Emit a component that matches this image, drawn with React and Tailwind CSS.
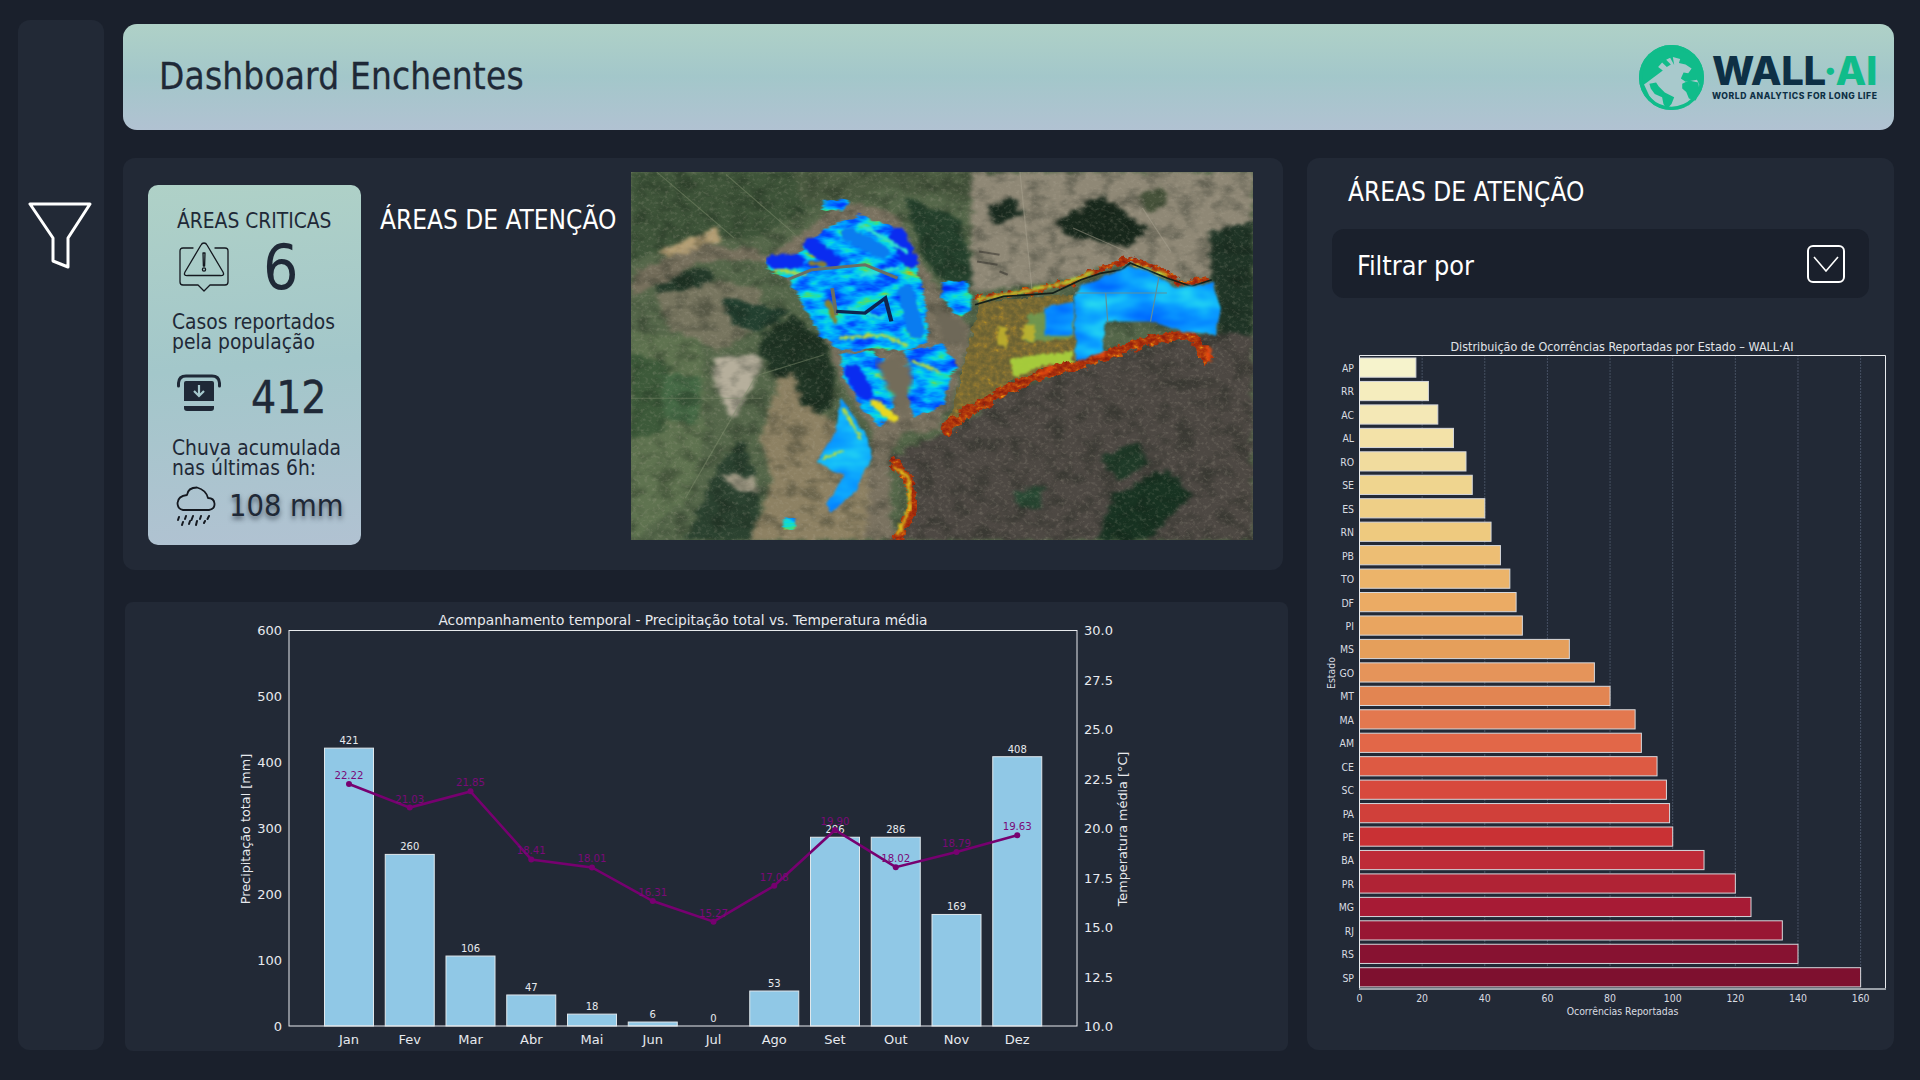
import React from "react";

const months = ["Jan","Fev","Mar","Abr","Mai","Jun","Jul","Ago","Set","Out","Nov","Dez"];
const rain = [421,260,106,47,18,6,0,53,286,286,169,408];
const temp = [22.22,21.03,21.85,18.41,18.01,16.31,15.27,17.08,19.90,18.02,18.79,19.63];
const states = [
["AP",18,"#f6f3cc"],["RR",22,"#f5edbe"],["AC",25,"#f4e8b6"],["AL",30,"#f3e2a8"],["RO",34,"#f1dc9e"],["SE",36,"#efd58f"],
["ES",40,"#eecf87"],["RN",42,"#eeca7f"],["PB",45,"#edbe74"],["TO",48,"#ecb46a"],["DF",50,"#ebab64"],["PI",52,"#e9a560"],
["MS",67,"#e59f5b"],["GO",75,"#e5945a"],["MT",80,"#e28552"],["MA",88,"#e3784f"],["AM",90,"#e26748"],["CE",95,"#dd5a43"],
["SC",98,"#d7493d"],["PA",99,"#d0403a"],["PE",100,"#c93134"],["BA",110,"#be2b38"],["PR",120,"#b02335"],["MG",125,"#a71b35"],
["RJ",135,"#981633"],["RS",140,"#871231"],["SP",160,"#7e102f"]];

const headFont = "font-['DejaVu_Sans_Condensed','DejaVu_Sans',sans-serif] [font-stretch:condensed]";

function Funnel() {
  return (
    <svg width="66" height="68" viewBox="0 0 66 68" fill="none" stroke="#fff" strokeWidth="3" strokeLinejoin="round">
      <path d="M2 2H62L40 36V65L25 59V36Z" />
    </svg>
  );
}

function Globe() {
  return (
    <svg width="65" height="65" viewBox="27 0 194 194">
      <circle cx="124" cy="97" r="97" fill="#10bc8a" />
      <path fill="#a8c9cc" d="M42 118C60 104 78 92 98 76L84 66 96 52 110 66 122 58 108 44 120 38 132 60 128 36 150 42 146 54 166 58 184 70 174 84 160 82 152 100 166 110 200 104 207 118 206 150 190 170 168 184 140 192 105 190 80 178 58 152Z" />
      <path fill="#10bc8a" d="M58 116 78 112 86 124 104 142 132 156 124 176 110 192 100 176 96 156 74 146 62 130Z" />
      <path fill="#10bc8a" d="M156 116 176 106 204 112 208 140 196 166 176 160 168 140 156 130Z" />
      <circle cx="124" cy="97" r="92" fill="none" stroke="#10bc8a" strokeWidth="10" />
    </svg>
  );
}

function Logo() {
  return (
    <div className="flex items-center gap-[8px] mr-[17px]">
      <Globe />
      <div className="flex flex-col w-[165px]">
        <div className="font-['Inter',sans-serif] font-extrabold text-[40px] leading-[36px] tracking-[-0.4px] text-[#0e3045] whitespace-nowrap">
          WALL<span className="text-[#10bc8a]">·AI</span>
        </div>
        <div className="font-['Inter',sans-serif] font-extrabold text-[8.6px] leading-[12px] tracking-[0.55px] text-[#0e3045] whitespace-nowrap mt-[1px]">
          WORLD ANALYTICS FOR LONG LIFE
        </div>
      </div>
    </div>
  );
}

function AlertIcon() {
  return (
    <svg width="50" height="50" viewBox="0 0 50 50" fill="none" stroke="#14181f" strokeWidth="1.3" strokeLinejoin="round" strokeLinecap="round">
      <path d="M14 6H4Q1 6 1 9V40Q1 43 4 43H19L25 49 31 43H46Q49 43 49 40V9Q49 6 46 6H36" />
      <path d="M25 1Q27 1 28 3L44 30Q46 34 41 33.5H9Q4 34 6 30L22 3Q23 1 25 1Z" />
      <path d="M24 11H26L25.6 24H24.4Z" />
      <circle cx="25" cy="27.5" r="1.6" />
    </svg>
  );
}

function InboxIcon() {
  return (
    <svg width="44" height="38" viewBox="0 0 44 38" fill="none">
      <path d="M1.5 12V9Q2 2 9 2H35Q42 2 42.5 9V12" stroke="#1f2937" strokeWidth="3" strokeLinecap="round" />
      <path d="M9 7H35Q37 7 37 9V27H7V9Q7 7 9 7Z" fill="#1f2937" />
      <path d="M22 11V21M17 17 22 22 27 17" stroke="#a6cace" strokeWidth="2.2" fill="none" />
      <path d="M7 32H37V34Q37 37 34 37H10Q7 37 7 34Z" fill="#1f2937" />
    </svg>
  );
}

function RainIcon() {
  return (
    <svg width="40" height="40" viewBox="0 0 40 40" fill="none" stroke="#14181f" strokeLinecap="round" strokeLinejoin="round">
      <path strokeWidth="1.8" d="M7 24H33Q39 23 38.5 17.5 38 12 32 12 30 4 21 1.5 12 1.5 11 9 2 10 1.5 17 1.5 23 7 24Z" />
      <path strokeWidth="2" d="M3 31 2 34M10 30 9 33M17 30 15.5 34M25 30 24 33M33 30 31.5 33M7 36 6 39M14 35 13 38M21 35 20 39M29 35 28 37" />
    </svg>
  );
}

function SatelliteMap() {
  return (
    <svg className="block shrink-0" width="622" height="368" viewBox="27 22 1524 1103" preserveAspectRatio="none">
      <defs>
        <clipPath id="mapclip"><rect x="27" y="22" width="1524" height="1103" /></clipPath>
        <filter id="rough" x="-5%" y="-5%" width="110%" height="110%" colorInterpolationFilters="sRGB">
          <feTurbulence type="fractalNoise" baseFrequency="0.05" numOctaves="4" seed="4" result="t" />
          <feDisplacementMap in="SourceGraphic" in2="t" scale="34" xChannelSelector="R" yChannelSelector="G" />
          <feGaussianBlur stdDeviation="5" />
        </filter>
        <filter id="soft" x="-5%" y="-5%" width="110%" height="110%" colorInterpolationFilters="sRGB">
          <feTurbulence type="fractalNoise" baseFrequency="0.08" numOctaves="3" seed="11" result="t" />
          <feDisplacementMap in="SourceGraphic" in2="t" scale="16" xChannelSelector="R" yChannelSelector="G" />
          <feGaussianBlur stdDeviation="2.5" />
        </filter>
        <filter id="speck" x="0" y="0" width="100%" height="100%" colorInterpolationFilters="sRGB">
          <feTurbulence type="fractalNoise" baseFrequency="0.1" numOctaves="4" seed="21" />
          <feColorMatrix values="0 0 0 0 0.72  0 0 0 0 0.69  0 0 0 0 0.62  2 0 0 0 -1" />
          <feGaussianBlur stdDeviation="1.6" />
        </filter>
        <filter id="shade" x="0" y="0" width="100%" height="100%" colorInterpolationFilters="sRGB">
          <feTurbulence type="fractalNoise" baseFrequency="0.022" numOctaves="5" seed="31" />
          <feColorMatrix values="0 0 0 0 0.05  0 0 0 0 0.09  0 0 0 0 0.06  3 0 0 0 -1.35" />
          <feGaussianBlur stdDeviation="2" />
        </filter>
        <filter id="water" x="-10%" y="-10%" width="120%" height="120%" colorInterpolationFilters="sRGB">
          <feTurbulence type="fractalNoise" baseFrequency="0.016 0.026" numOctaves="5" seed="7" result="t" />
          <feColorMatrix in="t" values="1 0 0 0 0  1 0 0 0 0  1 0 0 0 0  0 0 0 0 1" />
          <feComponentTransfer result="c">
            <feFuncR type="table" tableValues="0 0 0 0 0 0 0 0.04 0.2 0.65 0.75 0.5" />
            <feFuncG type="table" tableValues="0.15 0.15 0.18 0.26 0.4 0.58 0.74 0.86 0.88 0.8 0.55 0.4" />
            <feFuncB type="table" tableValues="0.9 0.92 0.96 1 1 1 0.98 0.88 0.55 0.18 0.1 0.1" />
          </feComponentTransfer>
          <feTurbulence type="fractalNoise" baseFrequency="0.04" numOctaves="3" seed="2" result="d" />
          <feDisplacementMap in="SourceGraphic" in2="d" scale="24" xChannelSelector="R" yChannelSelector="G" result="shape" />
          <feComposite in="c" in2="shape" operator="in" />
          <feGaussianBlur stdDeviation="2.2" />
        </filter>
        <filter id="cyanw" x="-10%" y="-10%" width="120%" height="120%" colorInterpolationFilters="sRGB">
          <feTurbulence type="fractalNoise" baseFrequency="0.008 0.014" numOctaves="3" seed="12" result="t" />
          <feColorMatrix in="t" values="1 0 0 0 0  1 0 0 0 0  1 0 0 0 0  0 0 0 0 1" />
          <feComponentTransfer result="c">
            <feFuncR type="table" tableValues="0 0 0.02 0.04 0.08 0.15 0.3" />
            <feFuncG type="table" tableValues="0.35 0.42 0.52 0.62 0.74 0.84 0.9" />
            <feFuncB type="table" tableValues="1 1 1 1 0.98 0.95 0.8" />
          </feComponentTransfer>
          <feTurbulence type="fractalNoise" baseFrequency="0.03" numOctaves="2" seed="5" result="d" />
          <feDisplacementMap in="SourceGraphic" in2="d" scale="14" xChannelSelector="R" yChannelSelector="G" result="shape" />
          <feComposite in="c" in2="shape" operator="in" />
          <feGaussianBlur stdDeviation="2.5" />
        </filter>
        <filter id="flame" x="-10%" y="-10%" width="120%" height="120%" colorInterpolationFilters="sRGB">
          <feTurbulence type="fractalNoise" baseFrequency="0.07 0.09" numOctaves="3" seed="3" result="t" />
          <feColorMatrix in="t" values="1 0 0 0 0  1 0 0 0 0  1 0 0 0 0  0 0 0 0 1" />
          <feComponentTransfer result="c">
            <feFuncR type="table" tableValues="0.5 0.55 0.62 0.68 0.74 0.88 0.98" />
            <feFuncG type="table" tableValues="0.1 0.12 0.16 0.2 0.28 0.5 0.8" />
            <feFuncB type="table" tableValues="0.05 0.05 0.05 0.05 0.05 0.05 0.1" />
          </feComponentTransfer>
          <feTurbulence type="fractalNoise" baseFrequency="0.05" numOctaves="3" seed="8" result="d" />
          <feDisplacementMap in="SourceGraphic" in2="d" scale="30" xChannelSelector="R" yChannelSelector="G" result="shape" />
          <feComposite in="c" in2="shape" operator="in" />
          <feGaussianBlur stdDeviation="1.6" />
        </filter>
        <filter id="olive" x="-10%" y="-10%" width="120%" height="120%" colorInterpolationFilters="sRGB">
          <feTurbulence type="fractalNoise" baseFrequency="0.07 0.06" numOctaves="3" seed="15" result="t" />
          <feColorMatrix in="t" values="1 0 0 0 0  1 0 0 0 0  1 0 0 0 0  0 0 0 0 1" />
          <feComponentTransfer result="c">
            <feFuncR type="table" tableValues="0.42 0.42 0.42 0.44 0.48 0.52 0.58 0.7 0.7" />
            <feFuncG type="table" tableValues="0.38 0.38 0.38 0.4 0.42 0.44 0.48 0.55 0.6" />
            <feFuncB type="table" tableValues="0.2 0.2 0.2 0.2 0.2 0.2 0.18 0.15 0.15" />
          </feComponentTransfer>
          <feTurbulence type="fractalNoise" baseFrequency="0.05" numOctaves="2" seed="6" result="d" />
          <feDisplacementMap in="SourceGraphic" in2="d" scale="24" xChannelSelector="R" yChannelSelector="G" result="shape" />
          <feComposite in="c" in2="shape" operator="in" />
          <feGaussianBlur stdDeviation="1.5" />
        </filter>
      </defs>
      <g clipPath="url(#mapclip)">
        <rect x="27" y="22" width="1524" height="1103" fill="#55674a" />
        <g filter="url(#rough)">
          <path fill="#3e5439" d="M27 22H520L470 130 330 220 180 210 27 290Z" />
          <path fill="#4a5a40" d="M420 22H870V110L740 90 640 70 520 130 450 120Z" />
          <path fill="#243a2a" d="M70 330 220 310 235 375 90 390Z" />
          <path fill="#77755f" d="M85 390 250 350 350 380 340 490 240 560 120 490Z" />
          <path fill="#5f7350" d="M27 500 200 520 210 800 170 1000 27 1125Z" />
          <path fill="#3d5a3a" d="M27 560 120 600 110 800 27 820Z" />
          <path fill="#466a46" d="M100 620 200 640 190 780 110 760Z" />
          <path fill="#1f3424" d="M420 450 500 520 530 650 520 720 455 780 420 700 340 560 350 510Z" />
          <path fill="#24402c" d="M700 100 830 160 862 300 862 372 790 350 740 270Z" />
          <path fill="#2b4230" d="M160 1125 240 900 300 820 345 1000 330 1125Z" />
          <path fill="#234030" d="M250 400 420 440 340 500 270 480Z" />
          <path fill="#8d8163" d="M345 820 390 640 425 625 445 720 520 770 600 860 650 1125 320 1125 375 950Z" />
          <path fill="#b6af9c" d="M225 575 340 570 350 600 300 720 270 760 235 660Z" />
          <path fill="#a19a85" d="M250 930 330 935 340 980 290 980Z" />
          <path fill="#8f8876" d="M860 22H1551V300L1440 345 1350 345 1240 290 1120 340 860 385Z" />
          <path fill="#18281c" d="M1070 170 1180 95 1290 185 1250 250 1100 215Z" />
          <path fill="#1a2c20" d="M900 130 960 100 985 150 920 180Z" />
          <path fill="#1f3426" d="M1440 200 1551 170 1551 520 1470 500Z" />
          <path fill="#46523a" d="M1270 90 1330 60 1340 120 1290 150Z" />
          <path fill="#7a7260" d="M350 280 420 230 500 150 560 110 680 150 740 300 800 400 860 500 830 650 780 800 700 800 660 880 670 1125 600 1125 620 800 540 650 500 500 420 350Z" />
          <path fill="#77705d" d="M27 330 200 235 340 255 360 290 200 290 27 400Z" />
          <path fill="#b49e74" d="M90 260 240 185 250 225 110 280Z" />
          <path fill="#4d4843" d="M660 1125 730 1000 660 880 780 810 860 760 940 680 1040 640 1110 600 1200 580 1300 530 1400 520 1480 500 1551 510 1551 1125Z" />
          <path fill="#1f3a28" d="M1180 880 1270 830 1290 900 1220 950Z" />
          <path fill="#183322" d="M1170 1125 1210 990 1340 910 1400 990 1290 1125Z" />
          <path fill="#2a4a35" d="M970 980 1040 960 1030 1030 980 1030Z" />
        </g>
        <rect x="27" y="22" width="1524" height="1103" filter="url(#shade)" opacity="0.3" />
        <rect x="27" y="22" width="1524" height="1103" filter="url(#speck)" opacity="0.3" />
        <g fill="none" strokeWidth="3" opacity="0.5">
          <path stroke="#7d8b6c" d="M90 22 280 220M260 30 430 210M27 700 350 700M160 1000 330 640M340 630 500 570" />
          <path stroke="#a8a290" d="M980 22 1010 380M1280 130 1350 260M1110 190 1240 260" />
          <path stroke="#2c2a26" strokeWidth="6" d="M880 260 930 270M875 290 925 300M930 320 950 330" />
        </g>
        <path filter="url(#olive)" d="M880 410 1110 390 1120 590 1040 610 960 650 880 720 800 800 850 560Z" />
        <path filter="url(#soft)" fill="#6f9a52" opacity="0.9" d="M1000 450 1110 430 1110 520 990 530Z" />
        <path filter="url(#soft)" fill="#a8d03c" opacity="0.95" d="M955 580 1110 560 1110 600 1040 600 965 640Z" />
        <path filter="url(#soft)" fill="#c4b52c" opacity="0.85" d="M925 485 945 485 950 550 925 540ZM990 480 1015 480 1015 530 985 525Z" />
        <path filter="url(#flame)" fill="none" stroke="#f00" strokeWidth="30" d="M790 800 860 735 940 680 1040 625 1120 600 1200 565 1300 525 1400 510 1445 590" />
        <path filter="url(#flame)" fill="none" stroke="#f00" strokeWidth="16" d="M870 400 1000 380 1110 350 1180 312 1250 285 1330 318 1370 355 1440 342" />
        <path filter="url(#soft)" fill="none" stroke="#b8d838" strokeWidth="9" opacity="0.9" d="M875 405 1000 378 1100 352 1160 322 M1260 300 1340 335" />
        <path filter="url(#soft)" fill="none" stroke="#e84a10" strokeWidth="12" opacity="0.9" d="M1030 630 1060 605M1160 575 1190 565M1440 545 1445 590" />
        <path filter="url(#flame)" fill="none" stroke="#f00" strokeWidth="22" d="M665 880 710 950 720 1020 680 1125" />
        <path filter="url(#soft)" fill="none" stroke="#d8c820" strokeWidth="9" opacity="0.9" d="M670 905 705 935 712 1020 680 1110" />
        <path fill="none" stroke="#14201a" strokeWidth="5" d="M870 420 940 395 1060 385 1130 345 1180 325 1230 315 1250 295 1340 340 1400 365 1450 345" />
        <path filter="url(#cyanw)" d="M1110 400 1130 360 1200 330 1250 305 1300 325 1360 370 1450 355 1472 430 1460 510 1380 500 1300 470 1190 470 1185 560 1120 590Z" />
        <path fill="none" stroke="#5f8f9a" strokeWidth="3" d="M1115 385 1340 385 M1190 385 1195 470 M1320 340 1300 470" />
        <path filter="url(#cyanw)" d="M1040 430 1110 410 1110 510 1040 510Z" />
        <path filter="url(#water)" d="M360 285 430 275 500 190 590 152 670 190 715 270 745 380 755 530 700 560 620 550 540 560 490 510 430 380 415 340 365 320Z" />
        <path filter="url(#water)" d="M540 570 620 560 700 650 640 790 600 740 550 640Z" />
        <path filter="url(#water)" d="M700 560 790 540 825 600 790 720 720 760 700 680Z" />
        <path filter="url(#cyanw)" d="M540 700 600 800 615 880 580 970 520 1045 505 1020 550 930 480 890 530 800Z" />
        <path filter="url(#water)" d="M400 1055 432 1060 428 1095 400 1095Z" />
        <path filter="url(#water)" d="M498 108 558 104 550 140 498 142Z" />
        <path filter="url(#water)" d="M790 352 850 350 865 430 830 455 790 400Z" />
        <g filter="url(#soft)" fill="none" strokeLinecap="round">
          <path stroke="#0a2cf0" strokeWidth="42" d="M470 240 520 290M380 290 430 290M680 210 710 290M570 620 600 680" />
          <path stroke="#0a7cf0" strokeWidth="40" d="M560 210 640 260M700 380 725 500" />
          <path stroke="#b8d83c" strokeWidth="8" d="M380 315 450 330M540 520 640 510 700 540M720 590 780 620M630 630 690 660M545 730 590 820M500 880 540 860" />
          <path stroke="#e8d820" strokeWidth="22" d="M625 715 670 760" />
          <path stroke="#30e0d0" strokeWidth="10" d="M560 430 640 460M590 330 680 310M590 180 700 260" />
          <path stroke="#8a8030" strokeWidth="14" d="M510 410 530 470M470 295 500 300" />
        </g>
        <path fill="none" stroke="#6a6f64" strokeWidth="9" d="M410 345 470 315 600 300 680 340M520 370 530 450" />
        <path fill="none" stroke="#0e2550" strokeWidth="10" d="M530 440 600 445 650 400 665 470" />
        <path fill="#736c5a" filter="url(#rough)" d="M630 590 690 570 715 640 700 770 650 660Z" />
        <path fill="#6e6858" filter="url(#rough)" d="M770 420 840 480 850 540 790 530Z" />
      </g>
    </svg>
  );
}

function Sidebar() {
  return (
    <aside className="w-[86px] h-[1030px] mt-[20px] ml-[18px] shrink-0 rounded-[12px] bg-[#222936] pt-[182px] pl-[10px]">
      <Funnel />
    </aside>
  );
}

function Header() {
  return (
    <header className="h-[106px] rounded-[14px] bg-[linear-gradient(180deg,#afd1c7_0%,#a3c7ca_50%,#b1c2d2_100%)] flex items-center justify-between pl-[36px]">
      <h1 className={`${headFont} text-[36.6px] tracking-[0.2px] leading-none font-normal text-[#1f2937] [-webkit-text-stroke:0.3px_#1f2937]`}>Dashboard Enchentes</h1>
      <Logo />
    </header>
  );
}

function Card() {
  return (
    <div className={`w-[213px] h-[360px] rounded-[10px] bg-[linear-gradient(176deg,#afd1c7_0%,#a3c7ca_50%,#b1c2d2_100%)] pl-[24px] pt-[22px] text-[#1f2937] ${headFont} shrink-0`}>
      <div className="text-[20.8px] leading-[26px] pl-[5px] pt-[1px]">ÁREAS CRITICAS</div>
      <div className="flex items-center h-[52px] mt-[7px] pl-[7px]">
        <AlertIcon />
        <span className="text-[62px] leading-none ml-[34px] pt-[2px]">6</span>
      </div>
      <div className="text-[20.8px] leading-[20px] mt-[19px] whitespace-nowrap">Casos reportados<br />pela população</div>
      <div className="flex items-center h-[40px] mt-[21px] pl-[5px]">
        <InboxIcon />
        <span className="text-[44px] leading-none ml-[30px] pt-[10px] [-webkit-text-stroke:0.4px_#1f2937]">412</span>
      </div>
      <div className="text-[20.8px] leading-[20px] mt-[25px] whitespace-nowrap">Chuva acumulada<br />nas últimas 6h:</div>
      <div className="flex items-center h-[40px] mt-[8px] pl-[4px]">
        <RainIcon />
        <span className="text-[30.5px] leading-none ml-[13px] whitespace-nowrap [text-shadow:0_3px_5px_rgba(31,41,55,0.7)]">108 mm</span>
      </div>
    </div>
  );
}

function TopPanel() {
  return (
    <section className="h-[412px] rounded-[12px] bg-[#222936] flex pl-[25px] pt-[14px]">
      <div className="pt-[13px]"><Card /></div>
      <h2 className={`${headFont} w-[270px] pl-[19px] pt-[31px] text-[26px] leading-[34px] font-normal text-white whitespace-nowrap`}>ÁREAS DE ATENÇÃO</h2>
      <SatelliteMap />
    </section>
  );
}

function ComboChart() {
  const x0 = 349, dx = 60.75, base = 1026;
  const yR = (v) => base - v * 0.66;
  const yT = (v) => base - (v - 10) * 19.8;
  const pts = temp.map((t, i) => [x0 + i * dx, yT(t)]);
  return (
    <svg className="block font-['DejaVu_Sans',sans-serif]" width="1163" height="449" viewBox="125 602 1163 449">
      <text x="683" y="625" textAnchor="middle" fontSize="13.75" fill="#e8eaee">Acompanhamento temporal - Precipitação total vs. Temperatura média</text>
      {rain.map((r, i) => (
        <g key={i}>
          {r > 0 && <rect x={x0 + i * dx - 24.5} y={yR(r)} width="49" height={r * 0.66} fill="#90c8e6" stroke="#dfe7ec" strokeWidth="1" />}
          <text x={x0 + i * dx} y={yR(r) - 4} textAnchor="middle" fontSize="10" fill="#e8eaee">{r}</text>
          <text x={x0 + i * dx} y="1044" textAnchor="middle" fontSize="13" fill="#e8eaee">{months[i]}</text>
        </g>
      ))}
      <rect x="289" y="630.5" width="788" height="395.5" fill="none" stroke="#e8eaee" strokeWidth="1" />
      {[0,100,200,300,400,500,600].map((v) => (
        <text key={v} x="282" y={yR(v) + 5} textAnchor="end" fontSize="13" fill="#e8eaee">{v}</text>
      ))}
      {[10,12.5,15,17.5,20,22.5,25,27.5,30].map((v) => (
        <text key={v} x="1084" y={yT(v) + 5} fontSize="13" fill="#e8eaee">{v.toFixed(1)}</text>
      ))}
      <text transform="translate(250 829) rotate(-90)" textAnchor="middle" fontSize="12.8" fill="#e8eaee">Precipitação total [mm]</text>
      <text transform="translate(1127 829) rotate(-90)" textAnchor="middle" fontSize="12.8" fill="#e8eaee">Temperatura média [°C]</text>
      <polyline points={pts.map((p) => p.join(",")).join(" ")} fill="none" stroke="#770070" strokeWidth="2.6" />
      {pts.map((p, i) => (
        <g key={i}>
          <circle cx={p[0]} cy={p[1]} r="3" fill="#770070" />
          <text x={p[0]} y={p[1] - 5} textAnchor="middle" fontSize="10.2" fill="#7a0a78">{temp[i].toFixed(2)}</text>
        </g>
      ))}
    </svg>
  );
}

function StateChart() {
  const x0 = 1359.5, u = 3.132, top = 358, step = 23.45;
  return (
    <svg className="block font-['DejaVu_Sans_Condensed','DejaVu_Sans',sans-serif] [font-stretch:condensed]" width="587" height="700" viewBox="1307 340 587 700">
      <text x="1622" y="351" textAnchor="middle" fontSize="12.45" fill="#e0e3e8">Distribuição de Ocorrências Reportadas por Estado – WALL·AI</text>
      {[20,40,60,80,100,120,140,160].map((v) => (
        <line key={v} x1={x0 + v * u} x2={x0 + v * u} y1="355" y2="989" stroke="#465062" strokeWidth="1" strokeDasharray="2 1" />
      ))}
      {states.map(([s, v, c], i) => (
        <g key={s}>
          <rect x={x0} y={top + i * step} width={v * u} height="19.2" fill={c} stroke="#d6d8dc" strokeWidth="1" />
          <text x="1354" y={top + i * step + 14} textAnchor="end" fontSize="10.4" fill="#d9dce1">{s}</text>
        </g>
      ))}
      <path d="M1359.5 989V355.5H1885.5V989" fill="none" stroke="#e8eaee" strokeWidth="1" />
      <line x1="1359" x2="1886" y1="989" y2="989" stroke="#9aa0a8" strokeWidth="2" />
      {[0,20,40,60,80,100,120,140,160].map((v) => (
        <text key={v} x={x0 + v * u} y="1002" textAnchor="middle" fontSize="10.4" fill="#d9dce1">{v}</text>
      ))}
      <text x="1622.5" y="1015" textAnchor="middle" fontSize="10.4" fill="#d9dce1">Ocorrências Reportadas</text>
      <text transform="translate(1335 673) rotate(-90)" textAnchor="middle" fontSize="10.4" fill="#d9dce1">Estado</text>
    </svg>
  );
}

function RightPanel() {
  return (
    <section className="w-[587px] h-[892px] rounded-[12px] bg-[#222936] pt-[17px] shrink-0">
      <h2 className={`${headFont} pl-[41px] text-[26px] leading-[34px] font-normal text-white`}>ÁREAS DE ATENÇÃO</h2>
      <div className="mx-[25px] mt-[20px] h-[69px] rounded-[12px] bg-[#1a202c] flex items-center justify-between pl-[25px] pr-[24px]">
        <span className={`${headFont} text-[26.8px] text-white pt-[6px]`}>Filtrar por</span>
        <span className="w-[38px] h-[38px] rounded-[6px] border-2 border-white flex items-center justify-center">
          <svg width="26" height="16" viewBox="0 0 26 16" fill="none" stroke="#fff" strokeWidth="1.6"><path d="M1 1 13 15 25 1" /></svg>
        </span>
      </div>
      <div className="mt-[42px]"><StateChart /></div>
    </section>
  );
}

export default function App() {
  return (
    <div className="w-[1920px] h-[1080px] bg-[#1a202c] flex overflow-hidden">
      <Sidebar />
      <main className="ml-[19px] w-[1771px] pt-[24px]">
        <Header />
        <div className="flex mt-[28px] gap-[24px]">
          <div className="w-[1160px] shrink-0">
            <TopPanel />
            <div className="mt-[32px] w-[1163px] ml-[2px] h-[449px] rounded-[8px] bg-[#222936] overflow-hidden">
              <ComboChart />
            </div>
          </div>
          <RightPanel />
        </div>
      </main>
    </div>
  );
}
